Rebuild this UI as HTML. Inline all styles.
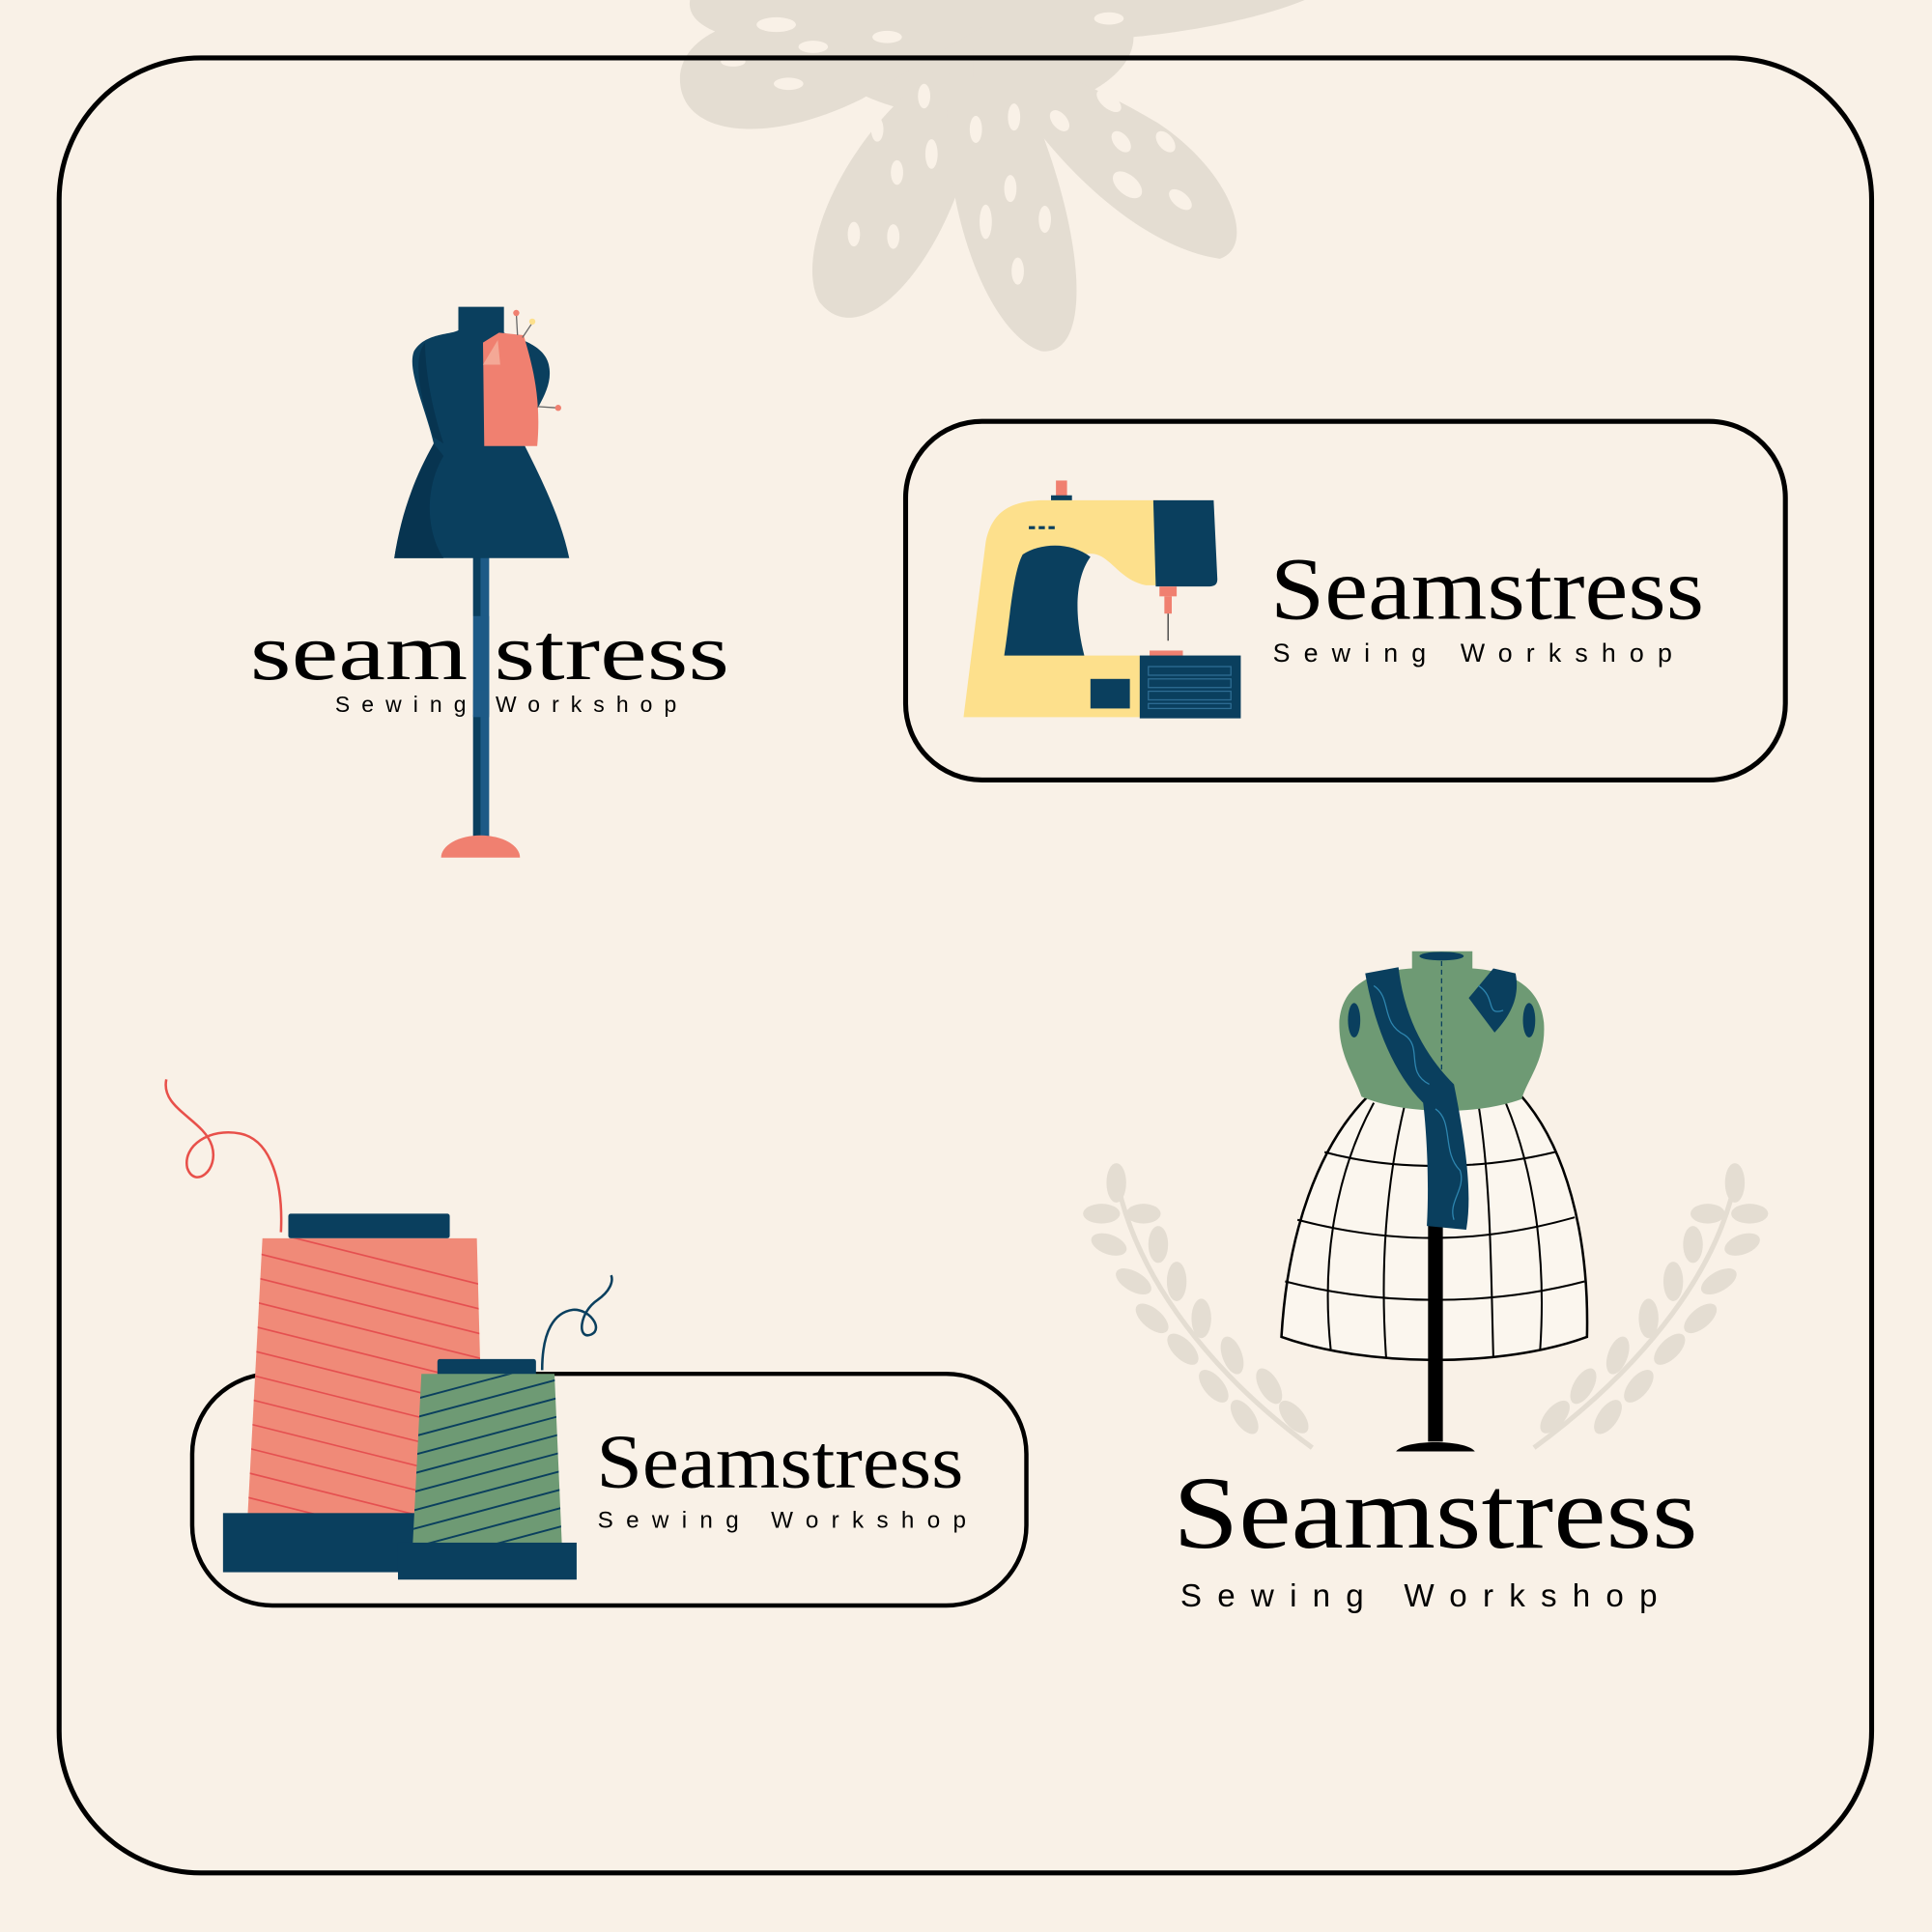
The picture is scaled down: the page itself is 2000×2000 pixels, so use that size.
<!DOCTYPE html>
<html><head><meta charset="utf-8"><style>
html,body{margin:0;padding:0;background:#f9f1e7;}
svg{display:block;width:2000px;height:2000px;}
.serif{font-family:"Liberation Serif",serif;}
.sans{font-family:"Liberation Sans",sans-serif;}
</style></head><body>
<svg viewBox="0 0 1568 1568" xmlns="http://www.w3.org/2000/svg">
<rect width="1568" height="1568" fill="#f9f1e7"/>
<!-- flower -->
<g fill="#e4ddd2">
<ellipse cx="790" cy="30" rx="130" ry="65"/>
<path d="M800 20 C700 0 560 0 552 60 C548 110 620 120 700 80 Z"/>
<path d="M790 40 C700 80 640 200 665 245 C700 290 770 210 790 110 Z"/>
<path d="M770 60 C760 160 800 270 845 285 C890 290 880 180 830 70 Z"/>
<path d="M800 40 C840 120 920 200 990 210 C1020 200 1000 140 940 100 C890 70 840 50 800 40 Z"/>
<path d="M820 30 C900 40 1020 20 1070 -5 L820 -5 Z"/>
<path d="M780 0 L560 0 C555 30 620 40 700 40 Z"/>
</g>
<g fill="#f9f1e7">
<ellipse cx="630" cy="20" rx="16" ry="6"/><ellipse cx="660" cy="38" rx="12" ry="5"/><ellipse cx="640" cy="68" rx="12" ry="5"/><ellipse cx="595" cy="50" rx="10" ry="4"/>
<ellipse cx="720" cy="30" rx="12" ry="5"/><ellipse cx="900" cy="15" rx="12" ry="5"/>
<ellipse cx="712" cy="105" rx="5" ry="10"/><ellipse cx="728" cy="140" rx="5" ry="10"/><ellipse cx="750" cy="78" rx="5" ry="10"/><ellipse cx="756" cy="125" rx="5" ry="12"/><ellipse cx="693" cy="190" rx="5" ry="10"/><ellipse cx="725" cy="192" rx="5" ry="10"/>
<ellipse cx="792" cy="105" rx="5" ry="11"/><ellipse cx="823" cy="95" rx="5" ry="11"/><ellipse cx="820" cy="153" rx="5" ry="11"/><ellipse cx="800" cy="180" rx="5" ry="14"/><ellipse cx="848" cy="178" rx="5" ry="11"/><ellipse cx="826" cy="220" rx="5" ry="11"/>
<ellipse cx="860" cy="98" rx="6" ry="10" transform="rotate(-40 860 98)"/><ellipse cx="900" cy="82" rx="6" ry="12" transform="rotate(-50 900 82)"/><ellipse cx="910" cy="115" rx="6" ry="10" transform="rotate(-40 910 115)"/><ellipse cx="946" cy="115" rx="6" ry="10" transform="rotate(-40 946 115)"/><ellipse cx="915" cy="150" rx="8" ry="14" transform="rotate(-50 915 150)"/><ellipse cx="958" cy="162" rx="6" ry="11" transform="rotate(-50 958 162)"/>
</g>
<!-- main frame -->
<rect x="48" y="47" width="1471" height="1473" rx="115" fill="none" stroke="#000" stroke-width="4"/>

<!-- Logo 1 dress form -->
<rect x="384" y="450" width="13" height="230" fill="#1d5a86"/>
<rect x="384" y="450" width="6" height="230" fill="#0a3f5e"/>
<path d="M358 696 A32 18 0 0 1 422 696 Z" fill="#f08070"/>
<path d="M372 249 H409 V270 C420 275 445 280 446 300 C448 320 430 335 425 360 C440 390 455 420 462 453 H320 C325 420 340 390 352 360 C345 330 330 300 336 285 C345 270 365 272 372 268 Z" fill="#0a3f5e"/>
<path d="M352 360 C335 390 325 420 320 453 H360 C345 430 345 395 360 370 Z" fill="#073450"/>
<path d="M345 278 C335 290 340 320 352 355 L360 360 C350 330 345 300 345 278 Z" fill="#073450"/>
<path d="M392 278 L405 270 L425 272 C430 290 440 320 436 362 L393 362 Z" fill="#f08070"/>
<path d="M392 296 L404 276 L406 296 Z" fill="#f4a896"/>
<line x1="420" y1="272" x2="419" y2="254" stroke="#666" stroke-width="1"/><circle cx="419" cy="254" r="2.5" fill="#f08070"/>
<line x1="424" y1="274" x2="432" y2="262" stroke="#666" stroke-width="1"/><circle cx="432" cy="261" r="2.5" fill="#fde08c"/>
<line x1="436" y1="330" x2="452" y2="331" stroke="#666" stroke-width="1"/><circle cx="453" cy="331" r="2.5" fill="#f08070"/>
<text x="203" y="551" class="serif" font-size="66" fill="#000" textLength="389" lengthAdjust="spacingAndGlyphs">seam stress</text>
<rect x="379" y="500" width="5" height="80" fill="#f9f1e7"/>
<rect x="384" y="500" width="13" height="80" fill="#1d5a86"/>
<text x="272" y="578" class="sans" font-size="18" fill="#000" textLength="277">Sewing Workshop</text>
<rect x="384" y="560" width="13" height="22" fill="#1d5a86"/>

<!-- Logo 2 -->
<rect x="735" y="342" width="714" height="291" rx="62" fill="none" stroke="#000" stroke-width="4"/>
<path d="M857 390 H866 V404 H857 Z" fill="#f08070"/>
<rect x="853" y="402" width="17" height="6" fill="#0a3f5e"/>
<path d="M800 440 C805 415 820 407 845 406 H940 V475 H930 C905 470 900 445 880 450 C870 460 872 500 880 532 H926 V582 H782 Z" fill="#fde08c"/>
<path d="M830 450 C845 440 870 440 885 452 C872 470 872 500 880 532 H815 C820 500 822 465 830 450 Z" fill="#0a3f5e"/>
<path d="M936 406 H985 L988 470 C988 475 985 476 980 476 H938 Z" fill="#0a3f5e"/>
<rect x="941" y="476" width="14" height="8" fill="#f08070"/>
<rect x="945" y="484" width="6" height="14" fill="#f08070"/>
<line x1="948" y1="498" x2="948" y2="520" stroke="#333" stroke-width="1"/>
<rect x="933" y="528" width="27" height="5" fill="#f08070"/>
<rect x="925" y="532" width="82" height="51" fill="#0a3f5e"/>
<g stroke="#2e6d94" stroke-width="1" fill="none"><rect x="932" y="541" width="67" height="7"/><rect x="932" y="551" width="67" height="7"/><rect x="932" y="561" width="67" height="7"/><rect x="932" y="571" width="67" height="4"/></g>
<rect x="885" y="551" width="32" height="24" fill="#0a3f5e"/>
<g fill="#0a3f5e"><rect x="835" y="427" width="5" height="2.5"/><rect x="843" y="427" width="5" height="2.5"/><rect x="851" y="427" width="5" height="2.5"/></g>
<text x="1031" y="502" class="serif" font-size="72" fill="#000" textLength="352" lengthAdjust="spacingAndGlyphs">Seamstress</text>
<text x="1033" y="537" class="sans" font-size="21" fill="#000" textLength="324">Sewing Workshop</text>

<!-- Logo 3 -->
<rect x="156" y="1115" width="677" height="188" rx="65" fill="none" stroke="#000" stroke-width="3.5"/>
<path d="M228 1000 C230 960 220 925 195 920 C170 915 148 930 152 948 C158 965 178 950 172 930 C165 908 130 900 135 876" fill="none" stroke="#e8504a" stroke-width="2"/>
<rect x="234" y="985" width="131" height="20" rx="2" fill="#0a3f5e"/>
<path d="M213 1005 H387 L393 1230 H201 Z" fill="#f08a78"/>
<clipPath id="sp1"><path d="M213 1005 H387 L393 1230 H201 Z"/></clipPath>
<g clip-path="url(#sp1)" stroke="#e55050" stroke-width="1.3">
<line x1="180" y1="990" x2="420" y2="1050"/><line x1="180" y1="1010" x2="420" y2="1070"/><line x1="180" y1="1030" x2="420" y2="1090"/><line x1="180" y1="1050" x2="420" y2="1110"/><line x1="180" y1="1070" x2="420" y2="1130"/><line x1="180" y1="1090" x2="420" y2="1150"/><line x1="180" y1="1110" x2="420" y2="1170"/><line x1="180" y1="1130" x2="420" y2="1190"/><line x1="180" y1="1150" x2="420" y2="1210"/><line x1="180" y1="1170" x2="420" y2="1230"/><line x1="180" y1="1190" x2="420" y2="1250"/><line x1="180" y1="1210" x2="420" y2="1270"/>
</g>
<rect x="181" y="1228" width="160" height="48" fill="#0a3f5e"/>
<path d="M440 1112 C440 1080 450 1065 465 1063 C478 1062 490 1078 480 1083 C468 1088 470 1065 485 1055 C495 1048 498 1040 496 1035" fill="none" stroke="#0a3f5e" stroke-width="2"/>
<rect x="355" y="1103" width="80" height="14" rx="2" fill="#0a3f5e"/>
<path d="M342 1115 H450 L456 1253 H335 Z" fill="#6e9a74"/>
<clipPath id="sp2"><path d="M342 1115 H450 L456 1253 H335 Z"/></clipPath>
<g clip-path="url(#sp2)" stroke="#0a3f5e" stroke-width="1.5">
<line x1="320" y1="1140" x2="470" y2="1100"/><line x1="320" y1="1155" x2="470" y2="1115"/><line x1="320" y1="1170" x2="470" y2="1130"/><line x1="320" y1="1185" x2="470" y2="1145"/><line x1="320" y1="1200" x2="470" y2="1160"/><line x1="320" y1="1215" x2="470" y2="1175"/><line x1="320" y1="1230" x2="470" y2="1190"/><line x1="320" y1="1245" x2="470" y2="1205"/><line x1="320" y1="1260" x2="470" y2="1220"/><line x1="320" y1="1275" x2="470" y2="1235"/><line x1="320" y1="1290" x2="470" y2="1250"/>
</g>
<rect x="323" y="1252" width="145" height="30" fill="#0a3f5e"/>
<text x="484" y="1207" class="serif" font-size="62" fill="#000" textLength="298" lengthAdjust="spacingAndGlyphs">Seamstress</text>
<text x="485" y="1240" class="sans" font-size="19" fill="#000" textLength="299">Sewing Workshop</text>

<!-- Logo 4 laurels -->
<g fill="#e4ddd2">
<path d="M905 950 C920 1040 990 1120 1065 1175" fill="none" stroke="#e4ddd2" stroke-width="4"/>
<path d="M1410 950 C1395 1040 1320 1120 1245 1175" fill="none" stroke="#e4ddd2" stroke-width="4"/>
<ellipse cx="906" cy="960" rx="8" ry="16"/><ellipse cx="894" cy="985" rx="15" ry="8"/><ellipse cx="928" cy="985" rx="14" ry="8"/><ellipse cx="900" cy="1010" rx="15" ry="8" transform="rotate(20 900 1010)"/><ellipse cx="940" cy="1010" rx="8" ry="15"/><ellipse cx="920" cy="1040" rx="16" ry="8" transform="rotate(30 920 1040)"/><ellipse cx="955" cy="1040" rx="8" ry="16"/><ellipse cx="935" cy="1070" rx="16" ry="8" transform="rotate(40 935 1070)"/><ellipse cx="975" cy="1070" rx="8" ry="16"/><ellipse cx="960" cy="1095" rx="16" ry="8" transform="rotate(45 960 1095)"/><ellipse cx="1000" cy="1100" rx="8" ry="16" transform="rotate(-20 1000 1100)"/><ellipse cx="985" cy="1125" rx="16" ry="8" transform="rotate(50 985 1125)"/><ellipse cx="1030" cy="1125" rx="8" ry="16" transform="rotate(-30 1030 1125)"/><ellipse cx="1010" cy="1150" rx="16" ry="8" transform="rotate(55 1010 1150)"/><ellipse cx="1050" cy="1150" rx="8" ry="16" transform="rotate(-40 1050 1150)"/>
<ellipse cx="1408" cy="960" rx="8" ry="16"/><ellipse cx="1420" cy="985" rx="15" ry="8"/><ellipse cx="1386" cy="985" rx="14" ry="8"/><ellipse cx="1414" cy="1010" rx="15" ry="8" transform="rotate(-20 1414 1010)"/><ellipse cx="1374" cy="1010" rx="8" ry="15"/><ellipse cx="1395" cy="1040" rx="16" ry="8" transform="rotate(-30 1395 1040)"/><ellipse cx="1358" cy="1040" rx="8" ry="16"/><ellipse cx="1380" cy="1070" rx="16" ry="8" transform="rotate(-40 1380 1070)"/><ellipse cx="1338" cy="1070" rx="8" ry="16"/><ellipse cx="1355" cy="1095" rx="16" ry="8" transform="rotate(-45 1355 1095)"/><ellipse cx="1313" cy="1100" rx="8" ry="16" transform="rotate(20 1313 1100)"/><ellipse cx="1330" cy="1125" rx="16" ry="8" transform="rotate(-50 1330 1125)"/><ellipse cx="1285" cy="1125" rx="8" ry="16" transform="rotate(30 1285 1125)"/><ellipse cx="1305" cy="1150" rx="16" ry="8" transform="rotate(-55 1305 1150)"/><ellipse cx="1262" cy="1150" rx="8" ry="16" transform="rotate(40 1262 1150)"/>
</g>
<!-- dress form 2 -->
<path d="M1040 1085 C1045 1000 1070 930 1110 890 H1235 C1270 930 1290 1000 1288 1085 C1220 1110 1110 1110 1040 1085 Z" fill="#fbf6ee" stroke="#000" stroke-width="2"/>
<g fill="none" stroke="#000" stroke-width="1.6">
<path d="M1075 935 C1130 950 1200 950 1262 935"/><path d="M1053 990 C1130 1010 1200 1010 1278 988"/><path d="M1043 1040 C1120 1060 1210 1060 1286 1040"/>
<path d="M1115 895 C1085 950 1072 1020 1080 1095"/><path d="M1140 897 C1125 960 1120 1030 1125 1102"/><path d="M1200 897 C1210 960 1210 1030 1212 1102"/><path d="M1222 895 C1245 950 1255 1020 1250 1095"/>
</g>
<rect x="1159" y="990" width="12" height="180" fill="#000"/>
<path d="M1133 1178 C1140 1168 1190 1168 1197 1178 Z" fill="#000"/>
<path d="M1146 772 H1195 V786 C1225 788 1250 800 1253 830 C1255 860 1240 875 1235 892 C1200 905 1140 905 1105 890 C1098 870 1086 855 1087 828 C1090 798 1115 788 1146 786 Z" fill="#6e9a74"/>
<ellipse cx="1170" cy="776" rx="18" ry="3.5" fill="#0a3f5e"/>
<line x1="1170" y1="780" x2="1170" y2="890" stroke="#0a3f5e" stroke-width="1" stroke-dasharray="4 3"/>
<ellipse cx="1099" cy="828" rx="5" ry="14" fill="#0a3f5e"/><ellipse cx="1241" cy="828" rx="5" ry="14" fill="#0a3f5e"/>
<path d="M1108 790 L1135 785 C1140 830 1160 860 1180 880 C1190 930 1195 970 1190 998 L1158 995 C1160 960 1158 920 1155 895 C1130 870 1115 830 1108 790 Z" fill="#0a3f5e"/>
<path d="M1212 786 L1230 790 C1234 810 1225 825 1213 838 L1192 810 Z" fill="#0a3f5e"/>
<g fill="none" stroke="#2e86b0" stroke-width="1"><path d="M1115 800 C1130 810 1120 830 1140 840 C1155 850 1140 870 1160 880"/><path d="M1165 900 C1180 910 1170 935 1185 950 C1190 965 1175 975 1180 990"/><path d="M1200 800 C1215 810 1205 825 1220 820"/></g>
<text x="952" y="1256" class="serif" font-size="84" fill="#000" textLength="426" lengthAdjust="spacingAndGlyphs">Seamstress</text>
<text x="958" y="1304" class="sans" font-size="26" fill="#000" textLength="387">Sewing Workshop</text>
</svg>
</body></html>
